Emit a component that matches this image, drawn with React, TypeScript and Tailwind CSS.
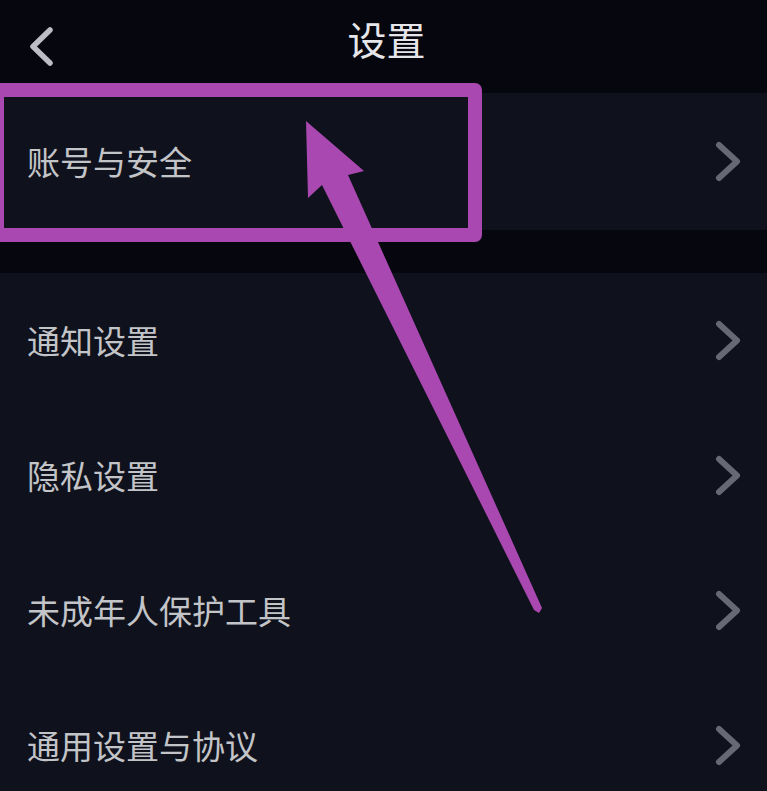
const sans = '[font-family:"Noto_Sans_CJK_SC","Noto_Sans",sans-serif]';

const groups: string[][] = [
  ['账号与安全'],
  ['通知设置', '隐私设置', '未成年人保护工具', '通用设置与协议'],
];

function BackIcon() {
  return (
    <svg width="27" height="41" viewBox="0 0 27 41" fill="none" stroke="#bdbdc4" strokeWidth="5.5" strokeLinecap="round" strokeLinejoin="round">
      <polyline points="22 4 5 20.5 22 37" />
    </svg>
  );
}

function ChevronIcon() {
  return (
    <svg width="28" height="41" viewBox="0 0 28 41" fill="none" stroke="#666874" strokeWidth="6" strokeLinecap="round" strokeLinejoin="round">
      <polyline points="5 4 23 20.5 5 37" />
    </svg>
  );
}

function Row({ label, first }: { label: string; first?: boolean }) {
  return (
    <div className={`flex items-center justify-between pl-[27px] pr-[25px] ${first ? 'h-[137px]' : 'h-[135px]'}`}>
      <span className={`text-[33px] leading-none text-[#c3c4c8] ${sans}`}>{label}</span>
      <ChevronIcon />
    </div>
  );
}

export default function App() {
  return (
    <div className="relative h-[791px] w-[767px] overflow-hidden bg-[#06060e]">
      {/* Header */}
      <div className="flex h-[93px] items-center px-[28px]">
        <div className="w-[60px]">
          <BackIcon />
        </div>
        <h1 className={`flex-1 pb-[17px] pl-[6px] text-center text-[39px] leading-none text-[#e6e6ea] ${sans}`}>设置</h1>
        <div className="w-[60px]" />
      </div>

      {/* Setting groups */}
      <div className="flex flex-col gap-[43px]">
        {groups.map((items, gi) => (
          <div key={gi} className="flex flex-col bg-[#0f121c]">
            {items.map((label) => (
              <Row key={label} label={label} first={gi === 0} />
            ))}
          </div>
        ))}
      </div>

      {/* Highlight frame around the first row */}
      <div className="absolute left-[-10px] top-[83px] h-[159px] w-[492px] rounded-[7px] border-[14px] border-[#a948b1]" />

      {/* Pointer arrow */}
      <svg className="absolute inset-0" width="767" height="791" viewBox="0 0 767 791">
        <polygon
          fill="#a948b1"
          points="306,121 364,171 348,175 542,608 539,613 534,610 322,185 308,198"
        />
      </svg>
    </div>
  );
}
